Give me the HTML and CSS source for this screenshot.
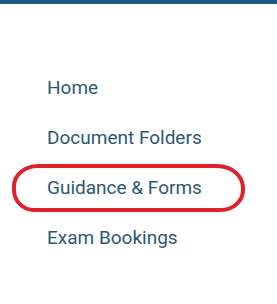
FILE: index.html
```html
<!DOCTYPE html>
<html lang="en">
<head>
  <meta charset="UTF-8" />
  <title>Menu</title>
  <link rel="stylesheet" href="styles.css">
</head>
<body>
  <div class="topbar"></div>

  <ul class="menu">
    <li><a href="#">Home</a></li>
    <li><a href="#">Document Folders</a></li>
    <li class="marked"><a href="#">Guidance &amp; Forms</a><span class="circle"></span></li>
    <li><a href="#">Exam Bookings</a></li>
  </ul>
</body>
</html>
```

FILE: styles.css
```css
body {
  margin: 0;
  padding: 0;
  background: #fff;
  font-family: Roboto, 'Noto Sans', sans-serif;
}

.topbar {
  height: 4px;
  background: #1c5a82;
}

.menu {
  list-style: none;
  margin: 0;
  padding: 69px 0 0 47px;
}

.menu li {
  position: relative;
  height: 50px;
  line-height: 30px;
}

.menu a {
  font-size: 19px;
  color: #2d5874;
  text-decoration: none;
}

.circle {
  position: absolute;
  left: -35px;
  top: -9px;
  width: 225px;
  height: 40px;
  border: 4px solid #e0202b;
  border-radius: 26px 28px 24px 22px / 22px 24px 22px 22px;
  pointer-events: none;
}
```
